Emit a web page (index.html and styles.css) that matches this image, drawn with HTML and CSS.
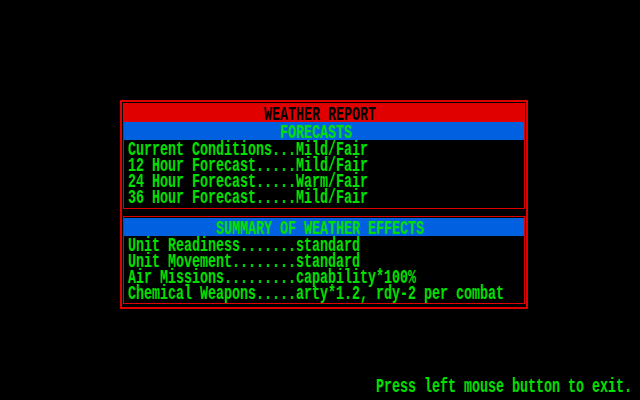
FILE: index.html
```
<!DOCTYPE html>
<html>
<head>
<meta charset="utf-8">
<link rel="stylesheet" href="styles.css">
</head>
<body>
<div class="screen">
  <div class="frame">
    <div class="panel panel-forecast">
      <div class="bar bar-title"><span class="g">WEATHER REPORT</span></div>
      <div class="bar bar-sub bar-shift"><span class="g">FORECASTS</span></div>
      <div class="rows">
        <div class="row"><span class="g">Current Conditions...Mild/Fair</span></div>
        <div class="row"><span class="g">12 Hour Forecast.....Mild/Fair</span></div>
        <div class="row"><span class="g">24 Hour Forecast.....Warm/Fair</span></div>
        <div class="row"><span class="g">36 Hour Forecast.....Mild/Fair</span></div>
      </div>
    </div>
    <div class="panel panel-effects">
      <div class="bar bar-sub"><span class="g">SUMMARY OF WEATHER EFFECTS</span></div>
      <div class="rows">
        <div class="row"><span class="g">Unit Readiness.......standard</span></div>
        <div class="row"><span class="g">Unit Movement........standard</span></div>
        <div class="row"><span class="g">Air Missions.........capability*100%</span></div>
        <div class="row"><span class="g">Chemical Weapons.....arty*1.2, rdy-2 per combat</span></div>
      </div>
    </div>
  </div>
  <div class="footer"><span class="g">Press left mouse button to exit.</span></div>
</div>
</body>
</html>
```
FILE: styles.css
```
html, body {
  margin: 0;
  padding: 0;
  background: #000;
}

body {
  width: 640px;
  height: 400px;
  overflow: hidden;
  font-family: "Liberation Mono", "DejaVu Sans Mono", monospace;
  font-size: 13.333px;
  font-weight: bold;
  color: #00e000;
}

.screen {
  padding-top: 100px;
}

.frame {
  margin-left: 120px;
  width: 402px;
  border: 2px solid #e00000;
  padding: 1px 1px 3px 1px;
  display: flex;
  flex-direction: column;
  gap: 7px;
}

.panel {
  border: 1px solid #e00000;
}

.panel-forecast {
  padding-bottom: 4px;
}

.panel-effects {
  padding-top: 1px;
  padding-bottom: 3px;
}

.bar {
  height: 18px;
  line-height: 18px;
  width: 384px;
  padding-left: 4px;
  padding-right: 12px;
  text-align: center;
  white-space: pre;
}

.bar-title {
  background: #e00000;
  color: #000;
}

.bar-sub {
  background: #0060e0;
}

.bar-shift .g {
  margin-right: 8px;
}

.rows {
  padding-left: 4px;
}

.row {
  height: 16px;
  line-height: 16px;
  white-space: pre;
}

.g {
  display: inline-block;
  line-height: 11px;
  transform: translateY(2px) scaleY(1.45);
}

.footer {
  margin-top: 68px;
  height: 16px;
  line-height: 16px;
  text-align: right;
  padding-right: 8px;
  white-space: pre;
}
```
